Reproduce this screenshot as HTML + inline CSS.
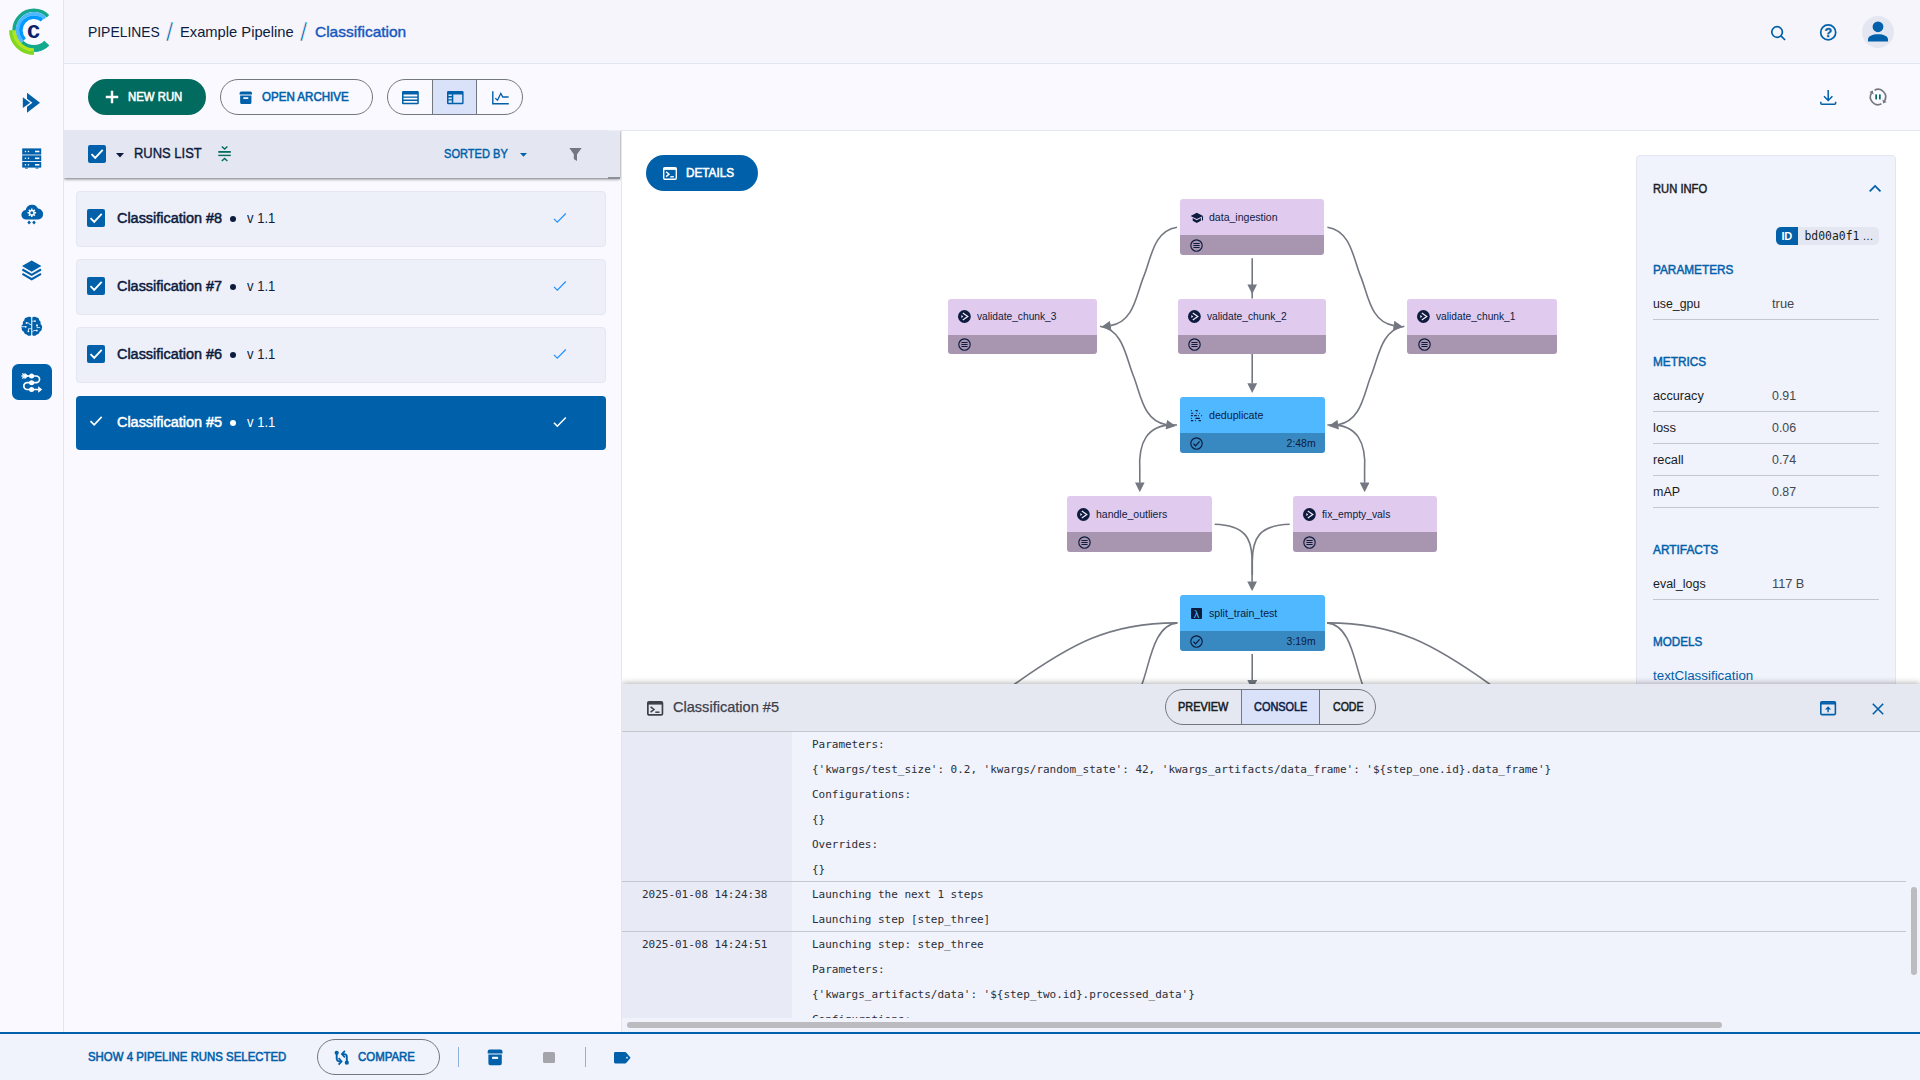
<!DOCTYPE html>
<html lang="en">
<head>
<meta charset="utf-8">
<title>Pipelines - Classification</title>
<style>
*{box-sizing:border-box;margin:0;padding:0}
html,body{width:1920px;height:1080px;overflow:hidden}
body{position:relative;background:#f9f9ff;font-family:"Liberation Sans",sans-serif;color:#0d1b3e;font-size:14px}
.abs{position:absolute}
svg{display:block;overflow:visible}
.t{position:absolute;white-space:nowrap;line-height:1}
/* sidebar */
#side{left:0;top:0;width:64px;height:1032px;background:#f9f9ff;border-right:1px solid #e3e6f2}
#hdr{left:64px;top:0;width:1856px;height:64px;background:#f5f5fb;border-bottom:1px solid #e2e6f1}
#tool{left:64px;top:64px;width:1856px;height:66px;background:#f9f9ff}
.pill{position:absolute;height:36px;border-radius:18px}
.btxt{font-weight:normal;font-size:12px;-webkit-text-stroke:.55px currentColor}
.med{font-weight:normal!important;-webkit-text-stroke:.4px currentColor}
/* list */
#list{left:64px;top:130px;width:558px;height:902px;background:#f9f9ff;border-right:1px solid #e3e6f2;overflow:hidden}
#lhead{left:0;top:0;width:556px;height:48px;background:#e4e7f1;box-shadow:0 1px 3px rgba(0,0,0,.55)}
.card{position:absolute;left:12px;width:530px;height:56px;background:#edf0f9;border:1px solid #e4e7f1;border-radius:4px}
.card.sel{background:#0060a9;border-color:#0060a9}
.cb{position:absolute;width:18px;height:18px;border-radius:2px;background:#0060a9}
.ctitle{font-size:14px;font-weight:normal;-webkit-text-stroke:.5px currentColor;color:#0d1b3e}
/* graph */
#graph{left:622px;top:130px;width:1298px;height:554px;background:#fff;border-top:1px solid #e2e6f1;overflow:hidden}
.node{position:absolute;border-radius:3px;overflow:hidden;height:55.45px}
.node .up{position:absolute;left:0;top:0;right:0;height:36px}
.node .dn{position:absolute;left:0;top:36px;right:0;bottom:0}
.node.q .up{background:#e0cbee}.node.q .dn{background:#a896b1}
.node.c .up{background:#50b8ff}.node.c .dn{background:#3889c2}
.nl{position:absolute;left:29px;top:11.5px;font-size:11px;line-height:13px;color:#0d1b3e;white-space:nowrap}
.nt{position:absolute;right:9px;top:40px;font-size:11px;line-height:13px;color:#0d1b3e;white-space:nowrap}
/* info */
#info{left:1014px;top:24px;width:260px;height:560px;background:#f0f2fc;border:1px solid #e3e6f2;border-radius:4px}
.sec{font-size:12px;font-weight:normal;-webkit-text-stroke:.45px currentColor;color:#0060a9}
.k{font-size:12.5px;color:#191c20}
.v{font-size:12.5px;color:#43474e}
.hr{position:absolute;left:16px;width:226px;height:1px;background:#c4c7d0}
/* bottom */
#bot{left:622px;top:684px;width:1298px;height:348px;background:#f0f2fc}
#bhead{left:0;top:0;width:1298px;height:48px;background:#e6e8f1;border-bottom:1px solid #c4c7d0;box-shadow:0 -1px 6px rgba(0,0,0,.3);clip-path:inset(-10px 0 0 0)}
#tscol{left:0;top:49px;width:170px;height:286px;background:#e8eaf6}
.mono{font-family:"DejaVu Sans Mono","Liberation Mono",monospace;font-size:11px;color:#2b2f36;white-space:pre;position:absolute;line-height:13px;letter-spacing:-.023px}
.sep{position:absolute;left:0;width:1284px;height:1px;background:#c4c7d0}
#foot{left:0;top:1032px;width:1920px;height:48px;background:#f0f2fc;border-top:2px solid #0060a9}
</style>
</head>
<body>
<!-- SIDEBAR -->
<div id="side" class="abs">
<svg width="64" height="420" viewBox="0 0 64 420">
 <!-- logo -->
 <g fill="none">
  <path d="M47.94,44.24A19.85,19.85 0 1 1 47.94,16.16" stroke="#14a88c" stroke-width="3.5"/>
  <path d="M46.77,43.07A18.2,18.2 0 0 1 21.03,43.07" stroke="#14a88c" stroke-width="6.8"/>
  <path d="M22.27,41.83A16.45,16.45 0 0 1 45.12,18.17" stroke="#4db8ff" stroke-width="3.4"/>
  <path d="M24.67,39.43A13.05,13.05 0 0 1 42.11,20.06" stroke="#0099ff" stroke-width="3.5"/>
  <path d="M33.90,50.05A19.85,19.85 0 0 1 14.05,30.20" stroke="#b4e61e" stroke-width="3.5"/>
  <path d="M33.90,53.40A23.2,23.2 0 0 1 10.70,30.20" stroke="#7fd81e" stroke-width="3.3"/>
 </g>
 <text x="33.500" y="38" text-anchor="middle" font-family="Liberation Sans, sans-serif" font-weight="bold" font-size="23.500" fill="#0b1f6b">c</text>
 <!-- pipelines chevrons -->
 <g fill="#0060a9">
  <polygon points="27,92.8 40,102.7 27,112.7"/>
  <polygon points="21,94.2 32.4,102.7 21,111.2" fill="#f9f9ff"/>
  <polygon points="22.8,97.3 30.2,102.7 22.8,108"/>
 </g>
 <!-- server -->
 <g fill="#0060a9">
  <rect x="22.2" y="148.4" width="19" height="6"/>
  <rect x="22.2" y="154.4" width="19" height="1.3" fill="#5b94c6"/>
  <rect x="22.2" y="155.7" width="19" height="5.4"/>
  <rect x="22.2" y="162" width="19" height="5.6"/>
  <rect x="25" y="167.6" width="2.8" height="1"/>
  <rect x="35.6" y="167.6" width="2.8" height="1"/>
  <g fill="#f9f9ff">
   <rect x="24.8" y="150.8" width="1.3" height="1.4"/><rect x="27.8" y="150.8" width="1.3" height="1.4"/><rect x="35" y="150.7" width="4.4" height="1.6"/>
   <rect x="24.8" y="157.6" width="1.3" height="1.4"/><rect x="27.8" y="157.6" width="1.3" height="1.4"/><rect x="35" y="157.5" width="4.4" height="1.6"/>
   <rect x="24.8" y="164.1" width="1.3" height="1.4"/><rect x="27.8" y="164.1" width="1.3" height="1.4"/><rect x="35" y="164" width="4.4" height="1.6"/>
  </g>
 </g>
 <!-- cloud gear -->
 <g fill="#0060a9">
  <path d="M26.500,219.500a4.700,4.700 0 0 1 -0.800,-9.400a6.500,6.500 0 0 1 12.300,-1.600a5.100,5.100 0 0 1 -0.800,11z"/>
  <polygon points="29.100,220.500 30.900,222.500 29.100,224.500 27.300,222.500"/>
  <polygon points="34,220.500 35.800,222.500 34,224.500 32.200,222.500"/>
  <g stroke="#f9f9ff" stroke-width="1.500" stroke-linecap="butt">
   <path d="M31.800,208.400v8.600M27.500,212.700h8.600M28.800,209.700l6,6M34.800,209.700l-6,6"/>
  </g>
  <circle cx="31.800" cy="212.700" r="3" fill="#f9f9ff"/>
  <circle cx="31.800" cy="212.700" r="1.500"/>
 </g>
 <!-- layers -->
 <g fill="#0060a9">
  <polygon points="31.700,260.500 41.400,266.100 31.700,271.700 22,266.100"/>
  <g fill="none" stroke="#0060a9" stroke-width="2.100"><path d="M22.400,269.500l9.300,5.400l9.300,-5.400"/><path d="M22.400,273.800l9.300,5.400l9.300,-5.400"/></g>
 </g>
 <!-- brain -->
 <g fill="#0060a9">
  <path d="M31.200,317.600C30.500,316.500 28,316.300 26.800,317.500C25.200,317.500 24.200,318.900 24.400,320.300C22.900,321 22.500,322.800 23,324C21.500,325 20.900,326.900 21.700,328.300C21.500,329.900 22.500,331.300 23.900,331.700C24.100,333.300 25.300,334.400 26.700,334.500C27.800,336 30.200,336.300 31.200,334.900Z"/>
  <path d="M32.300,317.600C33.000,316.500 35.500,316.300 36.700,317.500C38.300,317.500 39.300,318.900 39.100,320.300C40.600,321 41.000,322.800 40.500,324C42.000,325 42.600,326.900 41.800,328.300C42.000,329.900 41.000,331.300 39.600,331.700C39.400,333.300 38.200,334.400 36.800,334.500C35.700,336 33.300,336.300 32.300,334.900Z"/>
  <g stroke="#f9f9ff" stroke-width="0.800" fill="none">
   <path d="M21,326.700h4.500M26.600,323h2.200l1,1.600h1.400M28.400,331.200v-2.500h2.800M34.800,321.200h-2.500M37,325.200v2.400h3M36.800,330.500h-3.200l-1,1.600"/>
  </g>
  <g fill="#f9f9ff"><circle cx="25.700" cy="326.800" r="0.900"/><circle cx="26.500" cy="322.900" r="0.900"/><circle cx="28.400" cy="331.300" r="0.900"/><circle cx="35" cy="321.100" r="0.900"/><circle cx="37" cy="325.200" r="0.900"/><circle cx="36.900" cy="330.500" r="0.900"/></g>
 </g>
 <!-- active -->
 <rect x="12" y="364" width="40" height="36" rx="6.500" fill="#0060a9"/>
 <g fill="none" stroke="#fff" stroke-width="1.700">
  <path d="M21.500,376H36.200a3.350,3.350 0 0 1 0,6.700H27.200a3.400,3.400 0 0 0 0,6.800H39.500"/>
  <path d="M22.300,373.500l3,2.500l-3,2.500M24.500,373.500l3,2.500l-3,2.500" stroke-width="1.300"/>
 </g>
 <g fill="#fff">
  <circle cx="31.600" cy="376" r="2.500"/><circle cx="31.600" cy="382.700" r="2.500"/><circle cx="31.600" cy="389.500" r="2.500"/>
  <polygon points="38.200,386.200 42.200,389.500 38.200,392.800"/>
 </g>
</svg>
</div>
<!-- HEADER -->
<div id="hdr" class="abs">
 <span class="t" id="bc1" style="left:24px;top:24px;font-size:15px;color:#0d1b3e;transform:scaleX(0.926);transform-origin:0 50%">PIPELINES</span>
 <span class="t" style="left:102px;top:19px;font-size:26px;color:#0060a9;-webkit-text-stroke:.7px #f5f5fb">/</span>
 <span class="t" id="bc2" style="left:116px;top:24px;font-size:15px;color:#0d1b3e;transform:scaleX(0.981);transform-origin:0 50%">Example Pipeline</span>
 <span class="t" style="left:236px;top:19px;font-size:26px;color:#0060a9;-webkit-text-stroke:.7px #f5f5fb">/</span>
 <span class="t med" id="bc3" style="left:250.5px;top:24px;font-size:15px;color:#1557c0;transform:scaleX(1.032);transform-origin:0 50%">Classification</span>
 <svg class="abs" style="left:1696px;top:14px" width="150" height="36" viewBox="1760 14 150 36">
  <g fill="none" stroke="#0060a9" stroke-width="1.700">
   <circle cx="1777.100" cy="32" r="5.300"/><path d="M1780.900,35.800l4.200,4.200"/>
   <circle cx="1828.200" cy="32.400" r="7.500"/>
  </g>
  <text x="1828.200" y="36.800" text-anchor="middle" font-family="Liberation Sans, sans-serif" font-weight="bold" font-size="12.500" stroke="#0060a9" stroke-width="0.300" fill="#0060a9">?</text>
  <circle cx="1878" cy="32" r="16" fill="#e4e7f1"/>
  <circle cx="1878" cy="26.800" r="5.400" fill="#0060a9"/>
  <path d="M1868,41.500v-2.300c0,-3 4.500,-5 10,-5s10,2 10,5v2.300z" fill="#0060a9"/>
 </svg>
</div>
<!-- TOOLBAR -->
<div id="tool" class="abs">
 <div class="pill" style="left:24px;top:15px;width:118px;background:#006b5e"></div>
 <svg class="abs" style="left:41px;top:26px" width="14" height="14" viewBox="0 0 14 14"><path d="M7,0.800v12.400M0.800,7h12.400" stroke="#fff" stroke-width="2.400" fill="none"/></svg>
 <span class="t btxt" id="b1" style="left:64px;top:27px;color:#fff;transform:scaleX(0.947);transform-origin:0 50%">NEW RUN</span>
 <div class="pill" style="left:156px;top:15px;width:153px;border:1px solid #73777f"></div>
 <svg class="abs" style="left:174.800px;top:26.700px" width="13.600" height="13.400" viewBox="0 0 14 14" preserveAspectRatio="none"><path d="M0.600,2.200a1.800,1.800 0 0 1 1.800,-1.800h9.200a1.800,1.800 0 0 1 1.800,1.800v1.500h-12.800zM1.200,4.600h11.600v7.400a1.600,1.600 0 0 1 -1.600,1.600h-8.400a1.600,1.600 0 0 1 -1.600,-1.600z" fill="#0060a9"/><rect x="4.300" y="6.600" width="5.400" height="1.700" rx="0.500" fill="#f9f9ff"/></svg>
 <span class="t btxt" id="b2" style="left:198px;top:27px;color:#0060a9;transform:scaleX(0.963);transform-origin:0 50%">OPEN ARCHIVE</span>
 <div class="pill" style="left:323px;top:15px;width:136px;border:1px solid #73777f;overflow:hidden">
  <div class="abs" style="left:43.800px;top:0;width:45.700px;height:34px;background:#dae2f9;border-left:1px solid #73777f;border-right:1px solid #73777f"></div>
 </div>
 <svg class="abs" style="left:323px;top:15px" width="136" height="36" viewBox="387 79 136 36">
  <g fill="#0060a9">
   <path d="M402,92.200a1.200,1.200 0 0 1 1.200,-1.200h14.400a1.200,1.200 0 0 1 1.200,1.200v10.800a1.200,1.200 0 0 1 -1.200,1.200h-14.400a1.200,1.200 0 0 1 -1.200,-1.200zM403.500,94.500v1.900h13.800v-1.900zM403.500,97.700v1.900h13.800v-1.900zM403.500,100.900v1.900h13.800v-1.900z" fill-rule="evenodd"/>
   <path d="M447,92.200a1.200,1.200 0 0 1 1.200,-1.200h14.200a1.200,1.200 0 0 1 1.200,1.200v10.800a1.200,1.200 0 0 1 -1.200,1.200h-14.200a1.200,1.200 0 0 1 -1.200,-1.200zM448.500,94.500v1.600h3.300v-1.600zM448.500,97.500v1.700h3.300v-1.700zM448.500,100.600v2.100h3.300v-2.100zM453.300,94.500v8.200h8.900v-8.200z" fill-rule="evenodd"/>
  </g>
  <g fill="none" stroke="#0060a9" stroke-width="1.400">
   <path d="M492.800,91.200v12.500h16"/>
   <path d="M495.300,98.200l2.200,2l3.300,-6.800l2,3.600h5.800" stroke-width="1.300"/>
  </g>
 </svg>
 <svg class="abs" style="left:1752px;top:22px" width="80" height="24" viewBox="1816 86 80 24">
  <g fill="none" stroke="#0060a9" stroke-width="1.500">
   <path d="M1828.200,90v10.500M1824,96.300l4.200,4.200l4.200,-4.200"/><path d="M1820.800,101.800v1.400a1,1 0 0 0 1,1h12.800a1,1 0 0 0 1,-1v-1.400"/>
  </g>
  <g fill="none" stroke="#73777f" stroke-width="1.700"><path d="M1874.55,90.23A7.6,7.6 0 0 1 1884.58,100.80"/><path d="M1881.45,103.77A7.6,7.6 0 0 1 1871.42,93.20"/></g>
  <polygon points="1883.08,103.40 1886.66,102.00 1882.50,99.60" fill="#73777f"/><polygon points="1872.92,90.60 1869.34,92.00 1873.50,94.40" fill="#73777f"/>
  <rect x="1875.300" y="94.400" width="1.700" height="5" fill="#006b5e"/><rect x="1879" y="94.400" width="1.700" height="5" fill="#006b5e"/>
 </svg>
</div>
<!-- LIST -->
<div id="list" class="abs">
 <div id="lhead" class="abs">
  <div class="cb" style="left:24px;top:15px"><svg class="abs" style="left:2px;top:3px" width="14" height="12" viewBox="0 0 14 12"><path d="M1.500,6.200l3.700,3.700l7.500,-8" fill="none" stroke="#fff" stroke-width="1.9"/></svg></div>
  <svg class="abs" style="left:52px;top:22.500px" width="8" height="5" viewBox="0 0 8 5"><polygon points="0,0 8,0 4,4.500" fill="#0d1b3e"/></svg>
  <span class="t" id="rl" style="left:70px;top:14.900px;font-size:15px;-webkit-text-stroke:.4px currentColor;color:#0d1b3e;transform:scaleX(0.864);transform-origin:0 50%">RUNS LIST</span>
  <svg class="abs" style="left:154px;top:15px" width="14" height="18" viewBox="218 145 14 18"><g fill="none" stroke="#006b5e"><path d="M218.300,151.900h12.500" stroke-width="1.800"/><path d="M218.300,155.400h12.500" stroke-width="1.400"/><path d="M221.800,146.500l2.800,2.500l2.800,-2.500M221.800,160.900l2.800,-2.500l2.800,2.500" stroke-width="1.400"/></g></svg>
  <span class="t" id="sb" style="left:379.5px;top:18px;font-size:12px;-webkit-text-stroke:.45px currentColor;color:#0060a9;transform:scaleX(0.923);transform-origin:0 50%">SORTED BY</span>
  <svg class="abs" style="left:456px;top:22.500px" width="7" height="4" viewBox="0 0 7 4"><polygon points="0,0 7,0 3.500,3.800" fill="#0060a9"/></svg>
  <svg class="abs" style="left:505px;top:17px" width="14" height="15" viewBox="569 147 14 15"><path d="M569.300,147.900H581.700L577,154.300V160.900L573.800,158.900V154.300Z" fill="#737780"/></svg>
 </div>
 <div class="abs" style="left:544px;top:0;width:12px;height:1px;background:#eceef6"></div>
 <div class="abs" style="left:544px;top:47px;width:12px;height:1.500px;background:#8e9097"></div>
 <div class="card" style="top:61px">
  <div class="cb" style="left:10px;top:16.700px"><svg class="abs" style="left:2px;top:3px" width="14" height="12" viewBox="0 0 14 12"><path d="M1.500,6.200l3.700,3.700l7.500,-8" fill="none" stroke="#fff" stroke-width="1.9"/></svg></div>
  <span class="t ctitle" id="ct0" style="left:40px;top:19.200px;transform:scaleX(1.030);transform-origin:0 50%">Classification #8</span>
  <span class="t" style="left:153px;top:23.500px;width:6px;height:6px;border-radius:3px;background:#0d1b3e"></span>
  <span class="t" id="cv0" style="left:170px;top:19.200px;font-size:14px;color:#0d1b3e;transform:scaleX(0.932);transform-origin:0 50%">v 1.1</span>
  <svg class="abs" style="left:476px;top:20px" width="14" height="12" viewBox="0 0 14 12"><path d="M1,6.800l3.300,3.400l8.500,-8.700" fill="none" stroke="#1e90ff" stroke-width="1.200"/></svg>
 </div>
<div class="card" style="top:129px">
  <div class="cb" style="left:10px;top:16.700px"><svg class="abs" style="left:2px;top:3px" width="14" height="12" viewBox="0 0 14 12"><path d="M1.500,6.200l3.700,3.700l7.500,-8" fill="none" stroke="#fff" stroke-width="1.9"/></svg></div>
  <span class="t ctitle" id="ct1" style="left:40px;top:19.200px;transform:scaleX(1.030);transform-origin:0 50%">Classification #7</span>
  <span class="t" style="left:153px;top:23.500px;width:6px;height:6px;border-radius:3px;background:#0d1b3e"></span>
  <span class="t" id="cv1" style="left:170px;top:19.200px;font-size:14px;color:#0d1b3e;transform:scaleX(0.932);transform-origin:0 50%">v 1.1</span>
  <svg class="abs" style="left:476px;top:20px" width="14" height="12" viewBox="0 0 14 12"><path d="M1,6.800l3.300,3.400l8.500,-8.700" fill="none" stroke="#1e90ff" stroke-width="1.200"/></svg>
 </div>
<div class="card" style="top:197px">
  <div class="cb" style="left:10px;top:16.700px"><svg class="abs" style="left:2px;top:3px" width="14" height="12" viewBox="0 0 14 12"><path d="M1.500,6.200l3.700,3.700l7.500,-8" fill="none" stroke="#fff" stroke-width="1.9"/></svg></div>
  <span class="t ctitle" id="ct2" style="left:40px;top:19.200px;transform:scaleX(1.030);transform-origin:0 50%">Classification #6</span>
  <span class="t" style="left:153px;top:23.500px;width:6px;height:6px;border-radius:3px;background:#0d1b3e"></span>
  <span class="t" id="cv2" style="left:170px;top:19.200px;font-size:14px;color:#0d1b3e;transform:scaleX(0.932);transform-origin:0 50%">v 1.1</span>
  <svg class="abs" style="left:476px;top:20px" width="14" height="12" viewBox="0 0 14 12"><path d="M1,6.800l3.300,3.400l8.500,-8.700" fill="none" stroke="#1e90ff" stroke-width="1.200"/></svg>
 </div>
<div class="card sel" style="top:266px;height:54px;border:none">
  <svg class="abs" style="left:13px;top:19.200px" width="14" height="12" viewBox="0 0 14 12"><path d="M1.500,6.200l3.700,3.700l7.500,-8" fill="none" stroke="#fff" stroke-width="1.700"/></svg>
  <span class="t ctitle" id="ct3" style="left:41px;top:18.800px;color:#fff;transform:scaleX(1.030);transform-origin:0 50%">Classification #5</span>
  <span class="t" style="left:154px;top:23.500px;width:6px;height:6px;border-radius:3px;background:#fff"></span>
  <span class="t" id="cv3" style="left:171px;top:18.800px;font-size:14px;color:#fff;transform:scaleX(0.932);transform-origin:0 50%">v 1.1</span>
  <svg class="abs" style="left:477px;top:19.500px" width="14" height="12" viewBox="0 0 14 12"><path d="M1,6.800l3.300,3.400l8.500,-8.700" fill="none" stroke="#fff" stroke-width="1.600"/></svg>
 </div>

</div>
<!-- GRAPH -->
<div id="graph" class="abs">
<svg class="abs" style="left:0;top:0" width="1298" height="553" viewBox="622 131 1298 553">
<defs><marker id="ah" viewBox="0 0 10 10" refX="0.3" refY="5" markerWidth="10" markerHeight="9.700" markerUnits="userSpaceOnUse" orient="auto"><path d="M0,0L10,5L0,10z" fill="#747881"/></marker></defs>
<g fill="none" stroke="#747881" stroke-width="1.600">
 <path d="M1177,227.200c-23.6,3.5 -25.9,31.5 -33.25,49.2s-9.65,45.7 -33.25,49.2" marker-end="url(#ah)"/>
 <path d="M1327.400,227.200c23.6,3.5 25.9,31.5 33.25,49.2s9.65,45.7 33.25,49.2" marker-end="url(#ah)"/>
 <path d="M1100,326.300c23.6,3.5 25.9,31.5 33.25,49.2s9.65,45.7 33.25,49.2" marker-end="url(#ah)"/>
 <path d="M1404.400,326.300c-23.6,3.5 -25.9,31.5 -33.25,49.2s-9.65,45.7 -33.25,49.2" marker-end="url(#ah)"/>
 <path d="M1252.200,258.200V284.700" marker-end="url(#ah)"/><path d="M1252.200,284V298.600"/>
 <path d="M1252.200,353.700V383.600" marker-end="url(#ah)"/>
 <path d="M1177,425C1145.6,422.7 1138.3,444.7 1139.8,470V482.800" marker-end="url(#ah)"/>
 <path d="M1327.4,425C1358.8,422.7 1366.1,444.7 1364.6,470V482.800" marker-end="url(#ah)"/>
 <path d="M1214.7,524.2C1244.7,525.2 1252.9,537.4 1252.1,565V581.700" marker-end="url(#ah)"/>
 <path d="M1289.7,524.2C1259.7,525.2 1251.5,537.4 1252.3,565V575"/>
 <path d="M1177.4,622.9C1108.7,622.6 1069.7,644.8 1012.5,685.7"/><path d="M1177.4,622.9C1152.8,624.8 1149.7,665.9 1141.4,685.7"/>
 <path d="M1327.0,622.9C1395.7,622.6 1434.7,644.8 1491.9,685.7"/><path d="M1327.0,622.9C1351.6,624.8 1354.7,665.9 1363.0,685.7"/>
 <path d="M1252.200,654V680.400" marker-end="url(#ah)"/>
</g></svg>
<div class="node q" style="left:557.70px;top:68.40px;width:144.65px"><div class="up"></div><div class="dn"></div><svg class="abs" style="left:10.300px;top:12.600px" width="14" height="12" viewBox="1190 212 14 12"><path d="M1196.800,212.700L1203.100,216L1196.800,219L1190.600,216z" fill="#0d1b3e"/><path d="M1192.700,218.100v2.700l4.100,2.200l4.100,-2.200v-2.700l-4.100,2.100z" fill="#0d1b3e"/><path d="M1202.500,216.200v4.400" stroke="#0d1b3e" stroke-width="1.100"/></svg><span class="nl" id="n0" style="transform:scaleX(0.957);transform-origin:0 50%">data_ingestion</span><svg class="abs" style="left:10.300px;top:39.500px" width="13" height="13" viewBox="0 0 13 13"><circle cx="6.500" cy="6.500" r="5.700" fill="none" stroke="#0d1b3e" stroke-width="1.150"/><path d="M3.400,4.500h6.200M3.400,6.500h6.200M3.400,8.500h6.200" stroke="#0d1b3e" stroke-width="1.150"/></svg></div>
<div class="node q" style="left:325.70px;top:167.50px;width:149.35px"><div class="up"></div><div class="dn"></div><svg class="abs" style="left:10.100px;top:11.300px" width="13" height="13" viewBox="0 0 13 13"><circle cx="6.400" cy="6.500" r="6.400" fill="#0d1b3e"/><path d="M4.800,2.900l5,3.600l-5,3.600" fill="none" stroke="#f4e9fa" stroke-width="1.250"/><path d="M3.300,5.100l2,1.400l-2,1.400z" fill="#f4e9fa"/></svg><span class="nl" id="n1" style="transform:scaleX(0.928);transform-origin:0 50%">validate_chunk_3</span><svg class="abs" style="left:10.300px;top:39.500px" width="13" height="13" viewBox="0 0 13 13"><circle cx="6.500" cy="6.500" r="5.700" fill="none" stroke="#0d1b3e" stroke-width="1.150"/><path d="M3.400,4.500h6.200M3.400,6.500h6.200M3.400,8.500h6.200" stroke="#0d1b3e" stroke-width="1.150"/></svg></div>
<div class="node q" style="left:555.70px;top:167.50px;width:148.75px"><div class="up"></div><div class="dn"></div><svg class="abs" style="left:10.100px;top:11.300px" width="13" height="13" viewBox="0 0 13 13"><circle cx="6.400" cy="6.500" r="6.400" fill="#0d1b3e"/><path d="M4.800,2.900l5,3.600l-5,3.600" fill="none" stroke="#f4e9fa" stroke-width="1.250"/><path d="M3.300,5.100l2,1.400l-2,1.400z" fill="#f4e9fa"/></svg><span class="nl" id="n2" style="transform:scaleX(0.930);transform-origin:0 50%">validate_chunk_2</span><svg class="abs" style="left:10.300px;top:39.500px" width="13" height="13" viewBox="0 0 13 13"><circle cx="6.500" cy="6.500" r="5.700" fill="none" stroke="#0d1b3e" stroke-width="1.150"/><path d="M3.400,4.500h6.200M3.400,6.500h6.200M3.400,8.500h6.200" stroke="#0d1b3e" stroke-width="1.150"/></svg></div>
<div class="node q" style="left:785.30px;top:167.50px;width:149.45px"><div class="up"></div><div class="dn"></div><svg class="abs" style="left:10.100px;top:11.300px" width="13" height="13" viewBox="0 0 13 13"><circle cx="6.400" cy="6.500" r="6.400" fill="#0d1b3e"/><path d="M4.800,2.900l5,3.600l-5,3.600" fill="none" stroke="#f4e9fa" stroke-width="1.250"/><path d="M3.300,5.100l2,1.400l-2,1.400z" fill="#f4e9fa"/></svg><span class="nl" id="n3" style="transform:scaleX(0.928);transform-origin:0 50%">validate_chunk_1</span><svg class="abs" style="left:10.300px;top:39.500px" width="13" height="13" viewBox="0 0 13 13"><circle cx="6.500" cy="6.500" r="5.700" fill="none" stroke="#0d1b3e" stroke-width="1.150"/><path d="M3.400,4.500h6.200M3.400,6.500h6.200M3.400,8.500h6.200" stroke="#0d1b3e" stroke-width="1.150"/></svg></div>
<div class="node c" style="left:557.70px;top:266.40px;width:145.05px"><div class="up"></div><div class="dn"></div><svg class="abs" style="left:10.300px;top:11.600px" width="13" height="13" viewBox="1190 409 13 13"><g fill="#0d1b3e"><rect x="1190.9" y="410.05" width="1.0" height="1.1" rx="0.5"/><rect x="1195.4" y="410.05" width="2.5" height="1.1" rx="0.5"/><rect x="1190.9" y="412.75" width="2.4" height="1.1" rx="0.5"/><rect x="1196.1" y="412.75" width="1.0" height="1.1" rx="0.5"/><rect x="1199.1" y="412.75" width="1.0" height="1.1" rx="0.5"/><rect x="1190.9" y="415.05" width="2.0" height="1.1" rx="0.5"/><rect x="1194.1" y="415.05" width="2.7" height="1.1" rx="0.5"/><rect x="1197.9" y="415.05" width="1.0" height="1.1" rx="0.5"/><rect x="1201.1" y="415.05" width="1.0" height="1.1" rx="0.5"/><rect x="1190.9" y="417.85" width="1.0" height="1.1" rx="0.5"/><rect x="1195.4" y="417.85" width="4.5" height="1.1" rx="0.5"/><rect x="1190.9" y="420.05" width="2.4" height="1.1" rx="0.5"/><rect x="1194.9" y="420.05" width="1.0" height="1.1" rx="0.5"/><rect x="1198.5" y="420.05" width="2.5" height="1.1" rx="0.5"/></g></svg><span class="nl" id="n4" style="transform:scaleX(0.967);transform-origin:0 50%">deduplicate</span><svg class="abs" style="left:10.300px;top:39.500px" width="13" height="13" viewBox="0 0 13 13"><circle cx="6.500" cy="6.500" r="5.700" fill="none" stroke="#0d1b3e" stroke-width="1.150"/><path d="M3.500,6.800l2.100,2.100l4,-4.500" fill="none" stroke="#0d1b3e" stroke-width="1.300"/></svg><span class="nt" id="nt0" style="transform:scaleX(0.947);transform-origin:100% 50%">2:48m</span></div>
<div class="node q" style="left:445.40px;top:365.30px;width:144.65px"><div class="up"></div><div class="dn"></div><svg class="abs" style="left:10.100px;top:11.300px" width="13" height="13" viewBox="0 0 13 13"><circle cx="6.400" cy="6.500" r="6.400" fill="#0d1b3e"/><path d="M4.800,2.900l5,3.600l-5,3.600" fill="none" stroke="#f4e9fa" stroke-width="1.250"/><path d="M3.300,5.100l2,1.400l-2,1.400z" fill="#f4e9fa"/></svg><span class="nl" id="n5" style="transform:scaleX(0.954);transform-origin:0 50%">handle_outliers</span><svg class="abs" style="left:10.300px;top:39.500px" width="13" height="13" viewBox="0 0 13 13"><circle cx="6.500" cy="6.500" r="5.700" fill="none" stroke="#0d1b3e" stroke-width="1.150"/><path d="M3.400,4.500h6.200M3.400,6.500h6.200M3.400,8.500h6.200" stroke="#0d1b3e" stroke-width="1.150"/></svg></div>
<div class="node q" style="left:670.50px;top:365.30px;width:144.55px"><div class="up"></div><div class="dn"></div><svg class="abs" style="left:10.100px;top:11.300px" width="13" height="13" viewBox="0 0 13 13"><circle cx="6.400" cy="6.500" r="6.400" fill="#0d1b3e"/><path d="M4.800,2.900l5,3.600l-5,3.600" fill="none" stroke="#f4e9fa" stroke-width="1.250"/><path d="M3.300,5.100l2,1.400l-2,1.400z" fill="#f4e9fa"/></svg><span class="nl" id="n6" style="transform:scaleX(0.939);transform-origin:0 50%">fix_empty_vals</span><svg class="abs" style="left:10.300px;top:39.500px" width="13" height="13" viewBox="0 0 13 13"><circle cx="6.500" cy="6.500" r="5.700" fill="none" stroke="#0d1b3e" stroke-width="1.150"/><path d="M3.400,4.500h6.200M3.400,6.500h6.200M3.400,8.500h6.200" stroke="#0d1b3e" stroke-width="1.150"/></svg></div>
<div class="node c" style="left:557.70px;top:464.30px;width:145.05px"><div class="up"></div><div class="dn"></div><svg class="abs" style="left:11.300px;top:12.700px" width="11" height="11" viewBox="0 0 11 11"><rect x="0" y="0" width="11" height="11" rx="1" fill="#0d1b3e"/><text x="5.600" y="9.500" text-anchor="middle" font-family="Liberation Sans, sans-serif" font-size="11" fill="#50b8ff">λ</text></svg><span class="nl" id="n7" style="transform:scaleX(0.963);transform-origin:0 50%">split_train_test</span><svg class="abs" style="left:10.300px;top:39.500px" width="13" height="13" viewBox="0 0 13 13"><circle cx="6.500" cy="6.500" r="5.700" fill="none" stroke="#0d1b3e" stroke-width="1.150"/><path d="M3.500,6.800l2.100,2.100l4,-4.500" fill="none" stroke="#0d1b3e" stroke-width="1.300"/></svg><span class="nt" id="nt1" style="transform:scaleX(0.947);transform-origin:100% 50%">3:19m</span></div>
<div class="pill" style="left:24px;top:24px;width:112px;background:#0060a9"></div>
<svg class="abs" style="left:41px;top:36px" width="14" height="13" viewBox="0 0 14 13"><rect x="0.700" y="0.700" width="12.600" height="11.600" rx="1.200" fill="none" stroke="#fff" stroke-width="1.400"/><path d="M0.700,1.800h12.600" stroke="#fff" stroke-width="2.200"/><path d="M3.100,4.800l2.900,2.400l-2.900,2.400" fill="none" stroke="#fff" stroke-width="1.400"/><path d="M7.300,9.800h3.500" stroke="#fff" stroke-width="1.400"/></svg>
<span class="t btxt" id="det" style="left:64px;top:35.800px;color:#fff;transform:scaleX(0.978);transform-origin:0 50%">DETAILS</span>
<div id="info" class="abs">
 <span class="t" id="ri" style="left:16px;top:27px;font-size:12px;-webkit-text-stroke:.45px currentColor;color:#191c20;transform:scaleX(0.934);transform-origin:0 50%">RUN INFO</span>
 <svg class="abs" style="left:232px;top:28px" width="12" height="8" viewBox="0 0 12 8"><path d="M0.700,7.300l5.400,-5.400l5.400,5.400" fill="none" stroke="#0060a9" stroke-width="1.800"/></svg>
 <div class="abs" style="left:139px;top:70.700px;width:103px;height:18px;border-radius:5px;background:#e4e7f1;overflow:hidden"><div class="abs" style="left:0;top:0;width:21.500px;height:18px;background:#0060a9"></div><span class="t" style="left:5.500px;top:4.300px;font-size:11px;font-weight:bold;color:#fff;letter-spacing:-.2px">ID</span><span class="t" id="idv" style="left:28.500px;top:4.500px;font-family:'DejaVu Sans Mono',monospace;font-size:11.400px;color:#191c20">bd00a0f1<span style="font-family:'Liberation Sans',sans-serif;font-size:11px;margin-left:3px">…</span></span></div>
 <span class="t sec" id="s0" style="left:16px;top:107.6px;transform:scaleX(0.983);transform-origin:0 50%">PARAMETERS</span>
 <span class="t k" id="k1" style="left:16px;top:141.9px;transform:scaleX(0.984);transform-origin:0 50%">use_gpu</span><span class="t v" id="v1" style="left:135px;top:141.9px;transform:scaleX(1.035);transform-origin:0 50%">true</span>
 <div class="hr" style="top:162.9px"></div>
 <span class="t sec" id="s2" style="left:16px;top:199.7px;transform:scaleX(0.983);transform-origin:0 50%">METRICS</span>
 <span class="t k" id="k3" style="left:16px;top:233.9px;transform:scaleX(1.015);transform-origin:0 50%">accuracy</span><span class="t v" id="v3" style="left:135px;top:233.9px;transform:scaleX(0.990);transform-origin:0 50%">0.91</span>
 <div class="hr" style="top:254.9px"></div>
 <span class="t k" id="k4" style="left:16px;top:265.6px;transform:scaleX(1.039);transform-origin:0 50%">loss</span><span class="t v" id="v4" style="left:135px;top:265.6px;transform:scaleX(0.990);transform-origin:0 50%">0.06</span>
 <div class="hr" style="top:286.6px"></div>
 <span class="t k" id="k5" style="left:16px;top:298px;transform:scaleX(1.024);transform-origin:0 50%">recall</span><span class="t v" id="v5" style="left:135px;top:298px;transform:scaleX(0.990);transform-origin:0 50%">0.74</span>
 <div class="hr" style="top:319px"></div>
 <span class="t k" id="k6" style="left:16px;top:329.7px;transform:scaleX(0.997);transform-origin:0 50%">mAP</span><span class="t v" id="v6" style="left:135px;top:329.7px;transform:scaleX(0.990);transform-origin:0 50%">0.87</span>
 <div class="hr" style="top:350.7px"></div>
 <span class="t sec" id="s7" style="left:16px;top:387.5px;transform:scaleX(0.989);transform-origin:0 50%">ARTIFACTS</span>
 <span class="t k" id="k8" style="left:16px;top:421.7px;transform:scaleX(0.996);transform-origin:0 50%">eval_logs</span><span class="t v" id="v8" style="left:135px;top:421.7px;transform:scaleX(1.020);transform-origin:0 50%">117 B</span>
 <div class="hr" style="top:442.7px"></div>
 <span class="t sec" id="s9" style="left:16px;top:479.5px;transform:scaleX(0.971);transform-origin:0 50%">MODELS</span>
 <span class="t" id="mdl" style="left:16px;top:513.8px;font-size:12.500px;color:#0060a9;transform:scaleX(1.069);transform-origin:0 50%">textClassification</span>
</div>
</div>
<!-- BOTTOM -->
<div id="bot" class="abs">
 <div id="cbody" class="abs" style="left:0;top:48px;width:1298px;height:286px;overflow:hidden">
  <div class="abs" style="left:0;top:0;width:170px;height:286px;background:#e8eaf6"></div>
  <span class="mono" style="left:190px;top:5.5px">Parameters:</span>
  <span class="mono" style="left:190px;top:30.5px">{'kwargs/test_size': 0.2, 'kwargs/random_state': 42, 'kwargs_artifacts/data_frame': '${step_one.id}.data_frame'}</span>
  <span class="mono" style="left:190px;top:55.5px">Configurations:</span>
  <span class="mono" style="left:190px;top:80.5px">{}</span>
  <span class="mono" style="left:190px;top:105.5px">Overrides:</span>
  <span class="mono" style="left:190px;top:130.5px">{}</span>
  <span class="mono" style="left:190px;top:155.5px">Launching the next 1 steps</span>
  <span class="mono" style="left:190px;top:180.5px">Launching step [step_three]</span>
  <span class="mono" style="left:190px;top:205.5px">Launching step: step_three</span>
  <span class="mono" style="left:190px;top:230.5px">Parameters:</span>
  <span class="mono" style="left:190px;top:255.5px">{'kwargs_artifacts/data': '${step_two.id}.processed_data'}</span>
  <span class="mono" style="left:190px;top:280.5px">Configurations:</span>
  <span class="mono" style="left:20px;top:155.5px">2025-01-08 14:24:38</span>
  <span class="mono" style="left:20px;top:205.5px">2025-01-08 14:24:51</span>
  <div class="sep" style="top:149px"></div>
  <div class="sep" style="top:199.0px"></div>
 </div>
 <div class="abs" style="left:1289px;top:203px;width:6px;height:88px;border-radius:3px;background:#bcbcc0"></div>
 <div class="abs" style="left:5px;top:338px;width:1095px;height:6px;border-radius:3px;background:#bcbcc0"></div>
 <div id="bhead" class="abs">
  <svg class="abs" style="left:25.300px;top:17px" width="16.300" height="14.800" viewBox="0 0 16.300 14.800"><rect x="0.850" y="0.850" width="14.600" height="13.100" rx="1.200" fill="none" stroke="#3d414b" stroke-width="1.700"/><path d="M0.850,2.300h14.600" stroke="#3d414b" stroke-width="2.600"/><path d="M3.600,5.800l3.400,2.700l-3.400,2.700" fill="none" stroke="#3d414b" stroke-width="1.500"/><path d="M8.300,11.200h4.200" stroke="#3d414b" stroke-width="1.500"/></svg>
  <span class="t" id="bt" style="left:50.500px;top:16px;font-size:14.500px;-webkit-text-stroke:.25px currentColor;color:#3d414b;transform:scaleX(1.004);transform-origin:0 50%">Classification #5</span>
  <div class="pill" style="left:543px;top:5px;width:211px;height:36px;border:1px solid #73777f;overflow:hidden">
   <div class="abs" style="left:75px;top:0;width:78.500px;height:34px;background:#dae2f9;border-left:1px solid #73777f;border-right:1px solid #73777f"></div>
  </div>
  <span class="t btxt" id="tb1" style="left:556px;top:17px;color:#191c20;transform:scaleX(0.909);transform-origin:0 50%">PREVIEW</span>
  <span class="t btxt" id="tb2" style="left:632px;top:17px;color:#0e1d4a;transform:scaleX(0.910);transform-origin:0 50%">CONSOLE</span>
  <span class="t btxt" id="tb3" style="left:710.500px;top:17px;color:#191c20;transform:scaleX(0.880);transform-origin:0 50%">CODE</span>
  <svg class="abs" style="left:1198px;top:17.3px" width="16.200" height="14.400" viewBox="0 0 16.200 14.400"><rect x="0.800" y="0.800" width="14.600" height="12.800" rx="1" fill="none" stroke="#0060a9" stroke-width="1.600"/><path d="M0.800,2.300h14.600" stroke="#0060a9" stroke-width="2.400"/><path d="M8.100,11.300v-3.500" stroke="#0060a9" stroke-width="1.400"/><path d="M5,8.500l3.100,-3.300l3.100,3.300z" fill="#0060a9"/></svg>
  <svg class="abs" style="left:1250.200px;top:18.6px" width="12" height="12" viewBox="0 0 12 12"><path d="M0.800,0.800l10.400,10.400M11.200,0.800l-10.400,10.400" stroke="#0060a9" stroke-width="1.600"/></svg>
 </div>
</div>
<!-- FOOTER -->
<div id="foot" class="abs">
 <span class="t btxt" id="ft" style="left:88px;top:17px;color:#0060a9;transform:scaleX(0.950);transform-origin:0 50%">SHOW 4 PIPELINE RUNS SELECTED</span>
 <div class="pill" style="left:317px;top:5px;width:123px;border:1px solid #73777f"></div>
 <svg class="abs" style="left:334px;top:15.500px" width="16" height="16" viewBox="334 1049.500 16 16"><g fill="none" stroke="#0060a9" stroke-width="1.900"><path d="M336.700,1052.500v5.800a2.600,2.600 0 0 0 2.600,2.600h1.200"/><path d="M338.600,1057.700l3,3.200l-3,3.200" stroke-width="1.700"/><path d="M346.800,1062v-5.800a2.600,2.600 0 0 0 -2.600,-2.600h-1.200"/><path d="M344.900,1056.800l-3,-3.200l3,-3.200" stroke-width="1.700"/></g><circle cx="336.700" cy="1052.300" r="2.100" fill="#0060a9"/><circle cx="346.800" cy="1062.200" r="2.100" fill="#0060a9"/></svg>
 <span class="t btxt" id="cmp" style="left:358px;top:17px;color:#0060a9;transform:scaleX(0.952);transform-origin:0 50%">COMPARE</span>
 <div class="abs" style="left:458px;top:13.300px;width:1px;height:19.500px;background:#8fb0d8"></div>
 <svg class="abs" style="left:487.200px;top:15.300px" width="16.200" height="16.700" viewBox="0 0 14 14" preserveAspectRatio="none"><path d="M0.600,2.200a1.800,1.800 0 0 1 1.800,-1.800h9.200a1.800,1.800 0 0 1 1.800,1.800v1.500h-12.800zM1.200,4.600h11.600v7.400a1.600,1.600 0 0 1 -1.600,1.600h-8.400a1.600,1.600 0 0 1 -1.600,-1.600z" fill="#0060a9"/><rect x="4.300" y="6.600" width="5.400" height="1.700" rx="0.500" fill="#f0f2fc"/></svg>
 <div class="abs" style="left:543.300px;top:18.200px;width:11.700px;height:11px;border-radius:1.500px;background:#a3a5ab"></div>
 <div class="abs" style="left:585px;top:13.300px;width:1px;height:19.500px;background:#8fb0d8"></div>
 <svg class="abs" style="left:613.700px;top:17.800px" width="16.600" height="11.400" viewBox="0 0 16.600 11.400"><path d="M1.300,0h9.700a1.800,1.800 0 0 1 1.400,0.700l4.200,5l-4.200,5a1.800,1.800 0 0 1 -1.400,0.700h-9.700a1.300,1.300 0 0 1 -1.300,-1.300v-8.800a1.300,1.300 0 0 1 1.300,-1.300z" fill="#0060a9"/><circle cx="13" cy="5.700" r="0.900" fill="#f0f2fc"/></svg>
</div>
</body>
</html>
